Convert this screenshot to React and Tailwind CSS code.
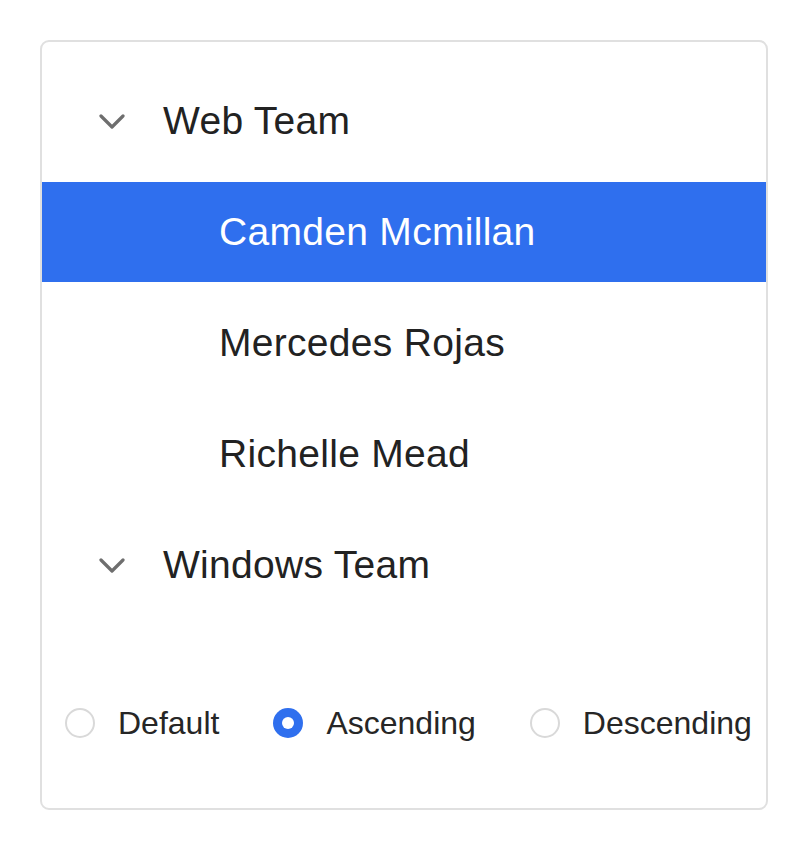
import React, { useState } from "react";

const teams = [
  { name: "Web Team", members: ["Camden Mcmillan", "Mercedes Rojas", "Richelle Mead"] },
  { name: "Windows Team", members: [] },
];

const sortOptions = ["Default", "Ascending", "Descending"];

function Chevron() {
  return (
    <svg width="26" height="15" viewBox="0 0 26 15" fill="none" className="shrink-0">
      <path d="M2 2l11 11L24 2" stroke="#6e6e6e" strokeWidth="3.2" strokeLinecap="round" strokeLinejoin="round" />
    </svg>
  );
}

function Radio({ label, checked, onSelect }) {
  return (
    <button onClick={onSelect} className="flex items-center gap-[23px]">
      {checked ? (
        <span className="w-[30px] h-[30px] rounded-full bg-[#2f6fee] flex items-center justify-center">
          <span className="w-[12px] h-[12px] rounded-full bg-white" />
        </span>
      ) : (
        <span className="w-[30px] h-[30px] rounded-full border-2 border-[#d9d9d9] bg-white" />
      )}
      <span className="text-[32px] leading-none text-[#262626]">{label}</span>
    </button>
  );
}

export default function App() {
  const [selected, setSelected] = useState("Camden Mcmillan");
  const [sort, setSort] = useState("Ascending");

  return (
    <div className="w-[808px] h-[850px] bg-white pt-[40px] pl-[40px]" style={{ fontFamily: '"Liberation Sans", Arial, sans-serif' }}>
      <div className="w-[728px] border-2 border-[#e0e0e0] rounded-[9px] overflow-hidden">
        {/* tree */}
        <div className="flex flex-col gap-[11px] pt-[29px]">
          {teams.map(team => (
            <React.Fragment key={team.name}>
              <div className="h-[100px] flex items-center pl-[57px]">
                <Chevron />
                <span className="ml-[38px] text-[39px] tracking-[0.3px] text-[#222]">{team.name}</span>
              </div>
              {team.members.map(m => (
                <div
                  key={m}
                  onClick={() => setSelected(m)}
                  className={`h-[100px] flex items-center pl-[177px] text-[39px] tracking-[0.3px] ${selected === m ? "bg-[#2f6fee] text-white" : "text-[#222]"}`}
                >
                  {m}
                </div>
              ))}
            </React.Fragment>
          ))}
        </div>

        {/* sort order */}
        <div className="flex items-center gap-[54px] pl-[23px] mt-[92px] mb-[69px]">
          {sortOptions.map(o => (
            <Radio key={o} label={o} checked={sort === o} onSelect={() => setSort(o)} />
          ))}
        </div>
      </div>
    </div>
  );
}
